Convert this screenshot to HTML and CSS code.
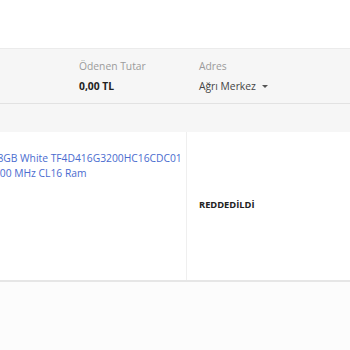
FILE: index.html
```html
<!DOCTYPE html>
<html lang="tr">
<head>
<meta charset="utf-8">
<link rel="stylesheet" href="styles.css">
</head>
<body>
<div class="page">
  <div class="top"></div>
  <div class="summary">
    <div class="cell spacer"></div>
    <div class="cell">
      <div class="label">Ödenen Tutar</div>
      <div class="value bold">0,00 TL</div>
    </div>
    <div class="cell">
      <div class="label">Adres</div>
      <div class="value">Ağrı Merkez <span class="caret"></span></div>
    </div>
  </div>
  <div class="gap"></div>
  <div class="row">
    <div class="product">
      <div class="pname"><span class="l1">x8GB White TF4D416G3200HC16CDC01</span><span class="l2">3200 MHz CL16 Ram</span></div>
    </div>
    <div class="status">REDDEDİLDİ</div>
  </div>
  <div class="rest"></div>
</div>
</body>
</html>
```
FILE: styles.css
```css
html, body {
  margin: 0;
  padding: 0;
  background: #fff;
  overflow: hidden;
}
body {
  font-family: "Open Sans", "Liberation Sans", sans-serif;
  font-size: 10.3px;
  color: #333;
}
.page {
  width: 350px;
  height: 350px;
  display: flex;
  flex-direction: column;
}
.top {
  height: 48px;
  background: #fff;
}
.summary {
  display: grid;
  grid-template-columns: 67px 120px 1fr;
  background: #f6f6f6;
  border-top: 1px solid #ebebeb;
  border-bottom: 1px solid #e2e2e2;
  box-sizing: border-box;
  height: 56px;
}
.cell {
  padding: 7px 12px 0;
}
.spacer { padding: 0; }
.label {
  color: #9b9b9b;
  line-height: 20px;
}
.value {
  color: #444;
  line-height: 20px;
  display: flex;
  align-items: center;
  gap: 6px;
}
.value.bold {
  font-weight: 700;
  color: #222;
}
.caret {
  width: 0;
  height: 0;
  border-left: 3px solid transparent;
  border-right: 3px solid transparent;
  border-top: 3px solid #555;
  margin-top: 1px;
}
.gap {
  height: 28px;
  background: #f6f6f6;
}
.row {
  display: grid;
  grid-template-columns: 187px 1fr;
  height: 148px;
  border-bottom: 2px solid #e6e6e6;
  background: #fff;
}
.product {
  border-right: 1px solid #efefef;
  overflow: hidden;
  padding-top: 19px;
}
.pname {
  color: #4a6ccf;
  line-height: 15px;
  white-space: nowrap;
}
.pname span { display: block; }
.pname .l1 { margin-left: -8px; }
.pname .l2 { margin-left: -12px; }
.status {
  padding-left: 12px;
  padding-bottom: 3px;
  display: flex;
  align-items: center;
  font-weight: 700;
  font-size: 9.3px;
  color: #222;
}
.rest {
  flex: 1;
  background: #fcfcfc;
}
```
